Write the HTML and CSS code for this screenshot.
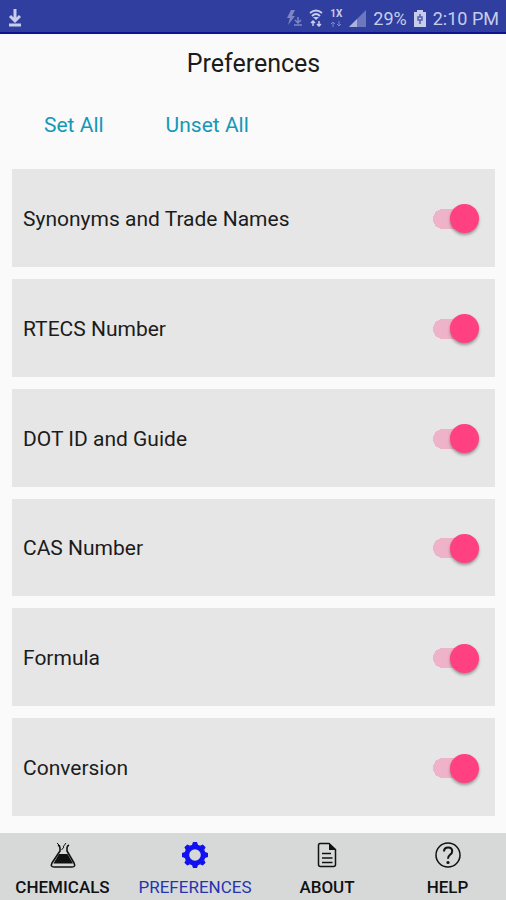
FILE: index.html
```html
<!DOCTYPE html>
<html lang="en">
<head>
<meta charset="utf-8">
<meta name="viewport" content="width=device-width, initial-scale=1">
<title>Preferences</title>
<link rel="stylesheet" href="styles.css">
</head>
<body>
<div class="status">
  <svg class="download" width="14" height="20" viewBox="0 0 14 20" aria-hidden="true"><path d="M7 1v12M2 8l5 5 5-5M1 17h12" fill="none" stroke="currentColor" stroke-width="3"/></svg>
  <div class="status-info">
    <svg class="dim" width="16" height="18" viewBox="0 0 16 18" aria-hidden="true"><path d="M5 1L1 9h3l-2 7 7-9H6l3-6z" fill="currentColor"/><path d="M12 8v6M9 11l3 3 3-3M8 16h8" fill="none" stroke="currentColor" stroke-width="1.5"/></svg>
    <svg width="14" height="18" viewBox="0 0 14 18" aria-hidden="true"><path d="M1 4q6-5 12 0M3 7q4-4 8 0" fill="none" stroke="currentColor" stroke-width="1.8"/><path d="M4 8h6l-3 3z" fill="currentColor"/><path d="M4 17v-5M2 14l2-2 2 2M10 12v5M8 15l2 2 2-2" fill="none" stroke="currentColor" stroke-width="1.5"/></svg>
    <span class="network">1X<svg class="dim" width="12" height="6" viewBox="0 0 12 6" aria-hidden="true"><path d="M3 6V1M1 3l2-2 2 2M9 0v5M7 3l2 2 2-2" fill="none" stroke="currentColor"/></svg></span>
    <svg width="17" height="17" viewBox="0 0 17 17" aria-hidden="true"><path d="M0 17L17 0v17z" fill="currentColor" opacity=".4"/><path d="M0 17l8-8v8z" fill="currentColor" opacity=".7"/></svg>
    <span>29%</span>
    <svg width="12" height="17" viewBox="0 0 12 17" aria-hidden="true"><path d="M3 0h6v2h3v15H0V2h3z" fill="currentColor"/><path d="M6 4v3M4 7h4v3H4zM6 10v4" fill="none" stroke="#5360ae" stroke-width="1.5"/></svg>
    <time>2:10 PM</time>
  </div>
</div>
<main class="page">
  <h1 class="title">Preferences</h1>
  <div class="actions">
    <button type="button" class="action">Set All</button>
    <button type="button" class="action">Unset All</button>
  </div>
  <div class="list">
    <label class="card"><span>Synonyms and Trade Names</span><input class="switch" type="checkbox" role="switch" checked></label>
    <label class="card"><span>RTECS Number</span><input class="switch" type="checkbox" role="switch" checked></label>
    <label class="card"><span>DOT ID and Guide</span><input class="switch" type="checkbox" role="switch" checked></label>
    <label class="card"><span>CAS Number</span><input class="switch" type="checkbox" role="switch" checked></label>
    <label class="card"><span>Formula</span><input class="switch" type="checkbox" role="switch" checked></label>
    <label class="card"><span>Conversion</span><input class="switch" type="checkbox" role="switch" checked></label>
  </div>
</main>
<nav class="tabs">
  <a class="tab" href="#chemicals">
    <svg width="28" height="28" viewBox="0 0 28 28" aria-hidden="true"><path d="M9 4q2 1 2 3v3L3 22q-2 4 2 4h18q4 0 2-4L18 10V7q0-2 2-3" fill="none" stroke="currentColor" stroke-width="1.600"/><path d="M10 13h8.500l5.500 9.500H4.500z" fill="currentColor"/><path d="M8 2l3 3M14 6l3-4M12.500 9l2.500-3" fill="none" stroke="currentColor"/></svg>
    <span>CHEMICALS</span>
  </a>
  <a class="tab active" href="#preferences" aria-current="page">
    <svg width="28" height="28" viewBox="0 0 28 28" aria-hidden="true"><circle cx="14" cy="14" r="8.200" fill="none" stroke="currentColor" stroke-width="4.800"/><path id="tooth" d="M11 4l1-3h4l1 3zM11 24l1 3h4l1-3z" fill="currentColor"/><use href="#tooth" transform="rotate(45 14 14)"/><use href="#tooth" transform="rotate(90 14 14)"/><use href="#tooth" transform="rotate(135 14 14)"/></svg>
    <span>PREFERENCES</span>
  </a>
  <a class="tab" href="#about">
    <svg width="28" height="28" viewBox="0 0 28 28" aria-hidden="true"><path d="M7 2.500h9l6.500 6v15q0 2-2 2h-13q-2 0-2-2v-19q0-2 1.500-2z" fill="none" stroke="currentColor" stroke-width="1.500"/><path d="M16 2l7 7h-7z" fill="currentColor"/><path d="M9 12.500h9M9 17h10.500M9 21.500h10.500" stroke="currentColor" stroke-width="1.500"/></svg>
    <span>ABOUT</span>
  </a>
  <a class="tab" href="#help">
    <svg width="28" height="28" viewBox="0 0 28 28" aria-hidden="true"><circle cx="14" cy="14" r="12" fill="none" stroke="currentColor" stroke-width="1.500"/><path d="M10 10.500q0-4 4.200-4 4 0 4 3.700 0 2-2.200 3.600-2 1.500-2 4" fill="none" stroke="currentColor" stroke-width="2"/><circle cx="14" cy="21.500" r="1.600" fill="currentColor"/></svg>
    <span>HELP</span>
  </a>
</nav>
</body>
</html>
```

FILE: styles.css
```css
* { box-sizing: border-box; }

body {
  margin: 0;
  min-height: 100vh;
  display: flex;
  flex-direction: column;
  background: #fafafa;
  color: #1c1c1c;
  font-family: Roboto, "Liberation Sans", sans-serif;
}

.status {
  display: flex;
  align-items: center;
  justify-content: space-between;
  height: 34px;
  padding: 4px 7px 0 8px;
  background: #303f9f;
  border-bottom: 2px solid #0b1390;
  color: #c7cdea;
  font-size: 18px;
}

.status-info {
  display: flex;
  align-items: center;
  gap: 7px;
}

.dim { opacity: 0.5; }

.network {
  display: flex;
  flex-direction: column;
  align-items: center;
  gap: 2px;
  font-size: 10px;
  font-weight: 700;
  line-height: 10px;
}

.page {
  flex: 1;
  display: flex;
  flex-direction: column;
  padding: 13px 11px 17px 12px;
}

.title {
  margin: 0;
  font-size: 25px;
  font-weight: 400;
  line-height: 34px;
  text-align: center;
}

.actions {
  display: flex;
  gap: 62px;
  padding: 28px 32px 27px;
}

.action {
  padding: 0;
  border: 0;
  background: none;
  color: #1498b8;
  font: inherit;
  font-size: 21px;
  line-height: 33px;
  cursor: pointer;
}

.list {
  flex: 1;
  display: grid;
  grid-auto-rows: 1fr;
  gap: 12px;
}

.card {
  display: flex;
  align-items: center;
  justify-content: space-between;
  padding: 12px 16px 10px 11px;
  background: #e6e6e6;
  font-size: 21px;
  line-height: 28px;
}

.switch {
  appearance: none;
  display: flex;
  align-items: center;
  justify-content: flex-end;
  width: 46px;
  height: 30px;
  margin: 0;
  background: linear-gradient(#efb3c9, #efb3c9) center / 28px 20px no-repeat, radial-gradient(circle at 10px 15px, #efb3c9 10px, transparent 10px);
  cursor: pointer;
}

.switch::before {
  content: "";
  width: 29px;
  height: 29px;
  border-radius: 50%;
  background: #ff4081;
  box-shadow: 0 2px 3px rgb(0 0 0 / 35%);
}

.switch:not(:checked) {
  justify-content: flex-start;
  filter: grayscale(1);
}

.tabs {
  display: grid;
  grid-template-columns: 125fr 140fr 124fr 117fr;
  height: 67px;
  background: #d6d9d8;
}

.tab {
  display: flex;
  flex-direction: column;
  align-items: center;
  gap: 6px;
  padding-top: 8px;
  color: #111;
  font-size: 17px;
  font-weight: 500;
  line-height: 24px;
  text-decoration: none;
}

.active { color: #2633b0; font-weight: 400; }
.active svg { color: #1010f0; }
```
